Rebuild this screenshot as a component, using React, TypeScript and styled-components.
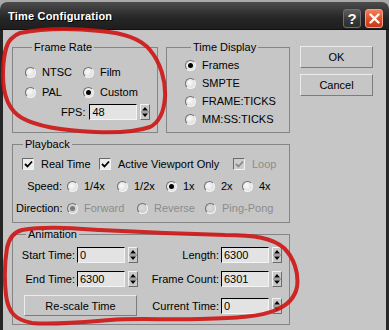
import styled, { createGlobalStyle, css } from "styled-components";

const GlobalStyle = createGlobalStyle`
  body {
    margin: 0;
    background: #a8a8a8;
    font-family: "Liberation Sans", Arial, sans-serif;
    font-size: 11px;
    color: #000;
  }
`;

interface OptionProps {
  label: string;
  checked?: boolean;
  disabled?: boolean;
  width?: number;
}

function RadioOption({ label, checked, disabled, width }: OptionProps) {
  return (
    <Option $w={width} $disabled={disabled}>
      <Radio $disabled={disabled}>{checked && <Dot $disabled={disabled} />}</Radio>
      {label}
    </Option>
  );
}

function CheckOption({ label, checked, disabled, width }: OptionProps) {
  return (
    <Option $w={width} $disabled={disabled} $gap={7}>
      <CheckBox $disabled={disabled}>
        {checked && (
          <svg width="9" height="9" viewBox="0 0 9 9">
            <polyline points="1,4 3.5,6.5 8,1.5" fill="none" stroke={disabled ? "#8a8a8a" : "#000"} strokeWidth="1.8" />
          </svg>
        )}
      </CheckBox>
      {label}
    </Option>
  );
}

function SpinField({ value }: { value: string }) {
  return (
    <SpinWrap>
      <NumberBox>{value}</NumberBox>
      <Spin>
        <svg width="8" height="14" viewBox="0 0 8 14">
          <polygon points="4,2 7,5.5 1,5.5" fill="#000" />
          <line x1="0" y1="7" x2="8" y2="7" stroke="#7a7a7a" strokeWidth="1" />
          <polygon points="1,8.5 7,8.5 4,12" fill="#000" />
        </svg>
      </Spin>
    </SpinWrap>
  );
}

export default function App() {
  return (
    <Page>
      <GlobalStyle />
      <Window>
        <TitleBar>
          <TitleText>Time Configuration</TitleText>
          <TitleButton $variant="help">?</TitleButton>
          <TitleButton $variant="close">
            <svg width="11" height="11" viewBox="0 0 11 11">
              <path d="M1.5 1.5 L9.5 9.5 M9.5 1.5 L1.5 9.5" stroke="#fff" strokeWidth="2.4" strokeLinecap="round" />
            </svg>
          </TitleButton>
        </TitleBar>
        <Body>
          <LeftColumn>
            <TopRow>
              <Group $pad="8px 4px 10px 12px">
                <Legend>Frame Rate</Legend>
                <RateGrid>
                  <RadioOption label="NTSC" width={58} />
                  <RadioOption label="Film" />
                  <RadioOption label="PAL" width={58} />
                  <RadioOption label="Custom" checked />
                  <FpsRow>
                    <FieldLabel>FPS:</FieldLabel>
                    <SpinField value="48" />
                  </FpsRow>
                </RateGrid>
              </Group>
              <Group $pad="2px 4px 4px 18px">
                <Legend $ml={6}>Time Display</Legend>
                <DisplayList>
                  <RadioOption label="Frames" checked />
                  <RadioOption label="SMPTE" />
                  <RadioOption label="FRAME:TICKS" />
                  <RadioOption label="MM:SS:TICKS" />
                </DisplayList>
              </Group>
            </TopRow>

            <Group $pad="2px 4px 3px 3px" $mt={5}>
              <Legend>Playback</Legend>
              <PlayRow $indent={6}>
                <CheckOption label="Real Time" checked width={77} />
                <CheckOption label="Active Viewport Only" checked width={134} />
                <CheckOption label="Loop" checked disabled />
              </PlayRow>
              <PlayRow>
                <RowLabel>Speed:</RowLabel>
                <RadioOption label="1/4x" width={50} />
                <RadioOption label="1/2x" width={49} />
                <RadioOption label="1x" checked width={38} />
                <RadioOption label="2x" width={38} />
                <RadioOption label="4x" />
              </PlayRow>
              <PlayRow>
                <RowLabel>Direction:</RowLabel>
                <RadioOption label="Forward" checked disabled width={70} />
                <RadioOption label="Reverse" disabled width={68} />
                <RadioOption label="Ping-Pong" disabled />
              </PlayRow>
            </Group>

            <Group $pad="6px 4px 8px 7px" $mt={5}>
              <Legend $ml={6}>Animation</Legend>
              <AnimGrid>
                <FieldLabel>Start Time:</FieldLabel>
                <SpinField value="0" />
                <FieldLabel>Length:</FieldLabel>
                <SpinField value="6300" />
                <FieldLabel>End Time:</FieldLabel>
                <SpinField value="6300" />
                <FieldLabel>Frame Count:</FieldLabel>
                <SpinField value="6301" />
                <RescaleButton>Re-scale Time</RescaleButton>
                <FieldLabel>Current Time:</FieldLabel>
                <SpinField value="0" />
              </AnimGrid>
            </Group>
          </LeftColumn>

          <ButtonColumn>
            <DialogButton>OK</DialogButton>
            <DialogButton>Cancel</DialogButton>
          </ButtonColumn>
        </Body>
      </Window>

      <Scribble viewBox="0 0 389 330" width="389" height="330">
        <path d="M20 33 C45 28 70 28 100 31 C125 33 142 40 150 50 C160 62 166 80 165 97 C164 112 160 122 150 127 C135 132 115 133 95 132 C70 131 40 128 22 118 C8 110 3 95 3 75 C3 58 6 44 11 39 C14 36 17 34 20 33 Z" />
        <path d="M22 230 C45 226 70 228 100 230 C140 232 190 234 225 235 C255 235 272 238 284 248 C294 258 299 273 297 287 C295 297 288 305 276 310 C260 317 235 318 200 319 C165 320 135 318 110 320 C85 322 55 325 32 323 C15 320 8 312 6 295 C4 278 5 260 7 248 C9 238 14 232 22 230 Z" />
      </Scribble>
    </Page>
  );
}

const Page = styled.div`
  position: relative;
  width: 389px;
  height: 330px;
  padding-top: 2px;
  box-sizing: border-box;
  overflow: hidden;
`;

const Window = styled.div`
  display: flex;
  flex-direction: column;
  height: 328px;
  border-radius: 7px 7px 0 0;
  overflow: hidden;
  background: #c6c6c6;
`;

const TitleBar = styled.div`
  display: flex;
  align-items: center;
  gap: 4px;
  height: 28px;
  padding: 0 6px 0 8px;
  background: linear-gradient(#4c4c4c 0%, #353535 35%, #262626 60%, #1e1e1e 100%);
  border-bottom: 1px solid #111;
  box-sizing: border-box;
`;

const TitleText = styled.div`
  flex: 1;
  color: #fff;
  font-weight: bold;
  font-size: 11px;
  letter-spacing: 0.2px;
  text-shadow: 1px 1px 0 #000;
  padding-top: 1px;
`;

const TitleButton = styled.div<{ $variant: "help" | "close" }>`
  display: flex;
  align-items: center;
  justify-content: center;
  width: 18px;
  height: 19px;
  margin-top: 5px;
  box-sizing: border-box;
  border-radius: 3px;
  color: #f4f4f4;
  font-weight: bold;
  font-size: 15px;
  ${(p) =>
    p.$variant === "help"
      ? css`
          background: linear-gradient(#5e5e5e, #3a3a3a 55%, #2e2e2e);
          border: 1px solid #6e6e6e;
        `
      : css`
          background: linear-gradient(#f4805e, #e0502c 50%, #c8381a);
          border: 1px solid #f3a088;
        `}
`;

const Body = styled.div`
  flex: 1;
  display: grid;
  grid-template-columns: 278px 73px;
  column-gap: 10px;
  align-items: start;
  padding: 11px 0 0 9px;
  border-left: 3px solid #262626;
  border-right: 3px solid #262626;
`;

const LeftColumn = styled.div`
  display: flex;
  flex-direction: column;
`;

const TopRow = styled.div`
  display: grid;
  grid-template-columns: 146px 124px;
  column-gap: 8px;
`;

const Group = styled.fieldset<{ $pad: string; $mt?: number }>`
  margin: ${(p) => p.$mt ?? 0}px 0 0 0;
  padding: ${(p) => p.$pad};
  min-width: 0;
  border: 1px solid #858585;
  box-sizing: border-box;
`;

const Legend = styled.legend<{ $ml?: number }>`
  margin-left: ${(p) => p.$ml ?? 7}px;
  padding: 0 2px;
  line-height: 13px;
`;

const Option = styled.label<{ $w?: number; $disabled?: boolean; $gap?: number }>`
  display: flex;
  align-items: center;
  gap: ${(p) => p.$gap ?? 6}px;
  width: ${(p) => (p.$w ? `${p.$w}px` : "auto")};
  flex: none;
  white-space: nowrap;
  color: ${(p) => (p.$disabled ? "#8c8c8c" : "#000")};
`;

const Radio = styled.span<{ $disabled?: boolean }>`
  display: flex;
  align-items: center;
  justify-content: center;
  width: 11px;
  height: 11px;
  box-sizing: border-box;
  border-radius: 50%;
  border: 1px solid;
  border-color: #707070 #f6f6f6 #f6f6f6 #707070;
  background: ${(p) =>
    p.$disabled
      ? "radial-gradient(circle at 40% 40%, #dcdcdc, #c4c4c4)"
      : "radial-gradient(circle at 40% 40%, #fafafa, #d6d6d6)"};
`;

const Dot = styled.span<{ $disabled?: boolean }>`
  width: 5px;
  height: 5px;
  border-radius: 50%;
  background: ${(p) => (p.$disabled ? "#7a7a7a" : "#000")};
`;

const CheckBox = styled.span<{ $disabled?: boolean }>`
  display: flex;
  align-items: center;
  justify-content: center;
  width: 12px;
  height: 12px;
  box-sizing: border-box;
  border: 1px solid;
  border-color: #6a6a6a #f2f2f2 #f2f2f2 #6a6a6a;
  background: ${(p) => (p.$disabled ? "#cdcdcd" : "#ececec")};
`;

const RateGrid = styled.div`
  display: grid;
  grid-template-columns: 58px auto;
  grid-auto-rows: 20px;
  align-items: center;
`;

const FpsRow = styled.div`
  grid-column: 1 / -1;
  display: flex;
  align-items: center;
  gap: 2px;
  padding-left: 36px;
`;

const DisplayList = styled.div`
  display: grid;
  grid-auto-rows: 18px;
  align-items: center;
`;

const PlayRow = styled.div<{ $indent?: number }>`
  display: flex;
  align-items: center;
  height: 22px;
  padding-left: ${(p) => p.$indent ?? 0}px;
`;

const RowLabel = styled.span`
  width: 46px;
  margin-right: 5px;
  text-align: right;
  flex: none;
`;

const FieldLabel = styled.span`
  text-align: right;
  padding-right: 2px;
  white-space: nowrap;
`;

const AnimGrid = styled.div`
  display: grid;
  grid-template-columns: 57px 61px 83px 61px;
  grid-template-rows: 16px 16px 21px;
  row-gap: 8px;
  align-items: center;
`;

const SpinWrap = styled.div`
  display: flex;
  align-items: center;
  gap: 3px;
`;

const NumberBox = styled.div`
  width: 48px;
  height: 16px;
  box-sizing: border-box;
  padding-left: 2px;
  line-height: 14px;
  border: 1px solid;
  border-color: #000 #f4f4f4 #f4f4f4 #000;
  background: #e3e3e3;
`;

const Spin = styled.div`
  display: flex;
  align-items: center;
  justify-content: center;
  width: 10px;
  height: 16px;
  box-sizing: border-box;
  border: 1px solid;
  border-color: #f2f2f2 #6c6c6c #6c6c6c #f2f2f2;
  background: #c9c9c9;
`;

const raisedButton = css`
  display: flex;
  align-items: center;
  justify-content: center;
  box-sizing: border-box;
  border: 1px solid;
  border-color: #ececec #7c7c7c #7c7c7c #ececec;
  background: #c6c6c6;
  font-size: 11px;
`;

const RescaleButton = styled.div`
  ${raisedButton};
  grid-column: 1 / 3;
  width: 113px;
  height: 21px;
  margin-left: 4px;
`;

const ButtonColumn = styled.div`
  display: flex;
  flex-direction: column;
  gap: 6px;
  margin-top: 5px;
`;

const DialogButton = styled.div`
  ${raisedButton};
  height: 22px;
`;

const Scribble = styled.svg`
  position: absolute;
  top: 0;
  left: 0;
  pointer-events: none;

  path {
    fill: none;
    stroke: #cf1414;
    stroke-width: 4;
    stroke-linejoin: round;
    opacity: 0.9;
    filter: blur(0.4px);
  }
`;
